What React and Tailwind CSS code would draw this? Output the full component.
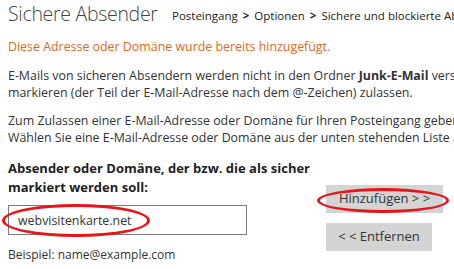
export default function App() {
  return (
    <div
      className="w-[454px] h-[269px] overflow-hidden bg-white text-[#333] px-2"
      style={{ fontFamily: '"Open Sans", "Noto Sans", sans-serif' }}
    >
      {/* Header */}
      <div className="flex items-center h-[28px] whitespace-nowrap">
        <h1 className="w-[164px] shrink-0 text-[19.5px] font-light tracking-[-0.3px] leading-[28px] text-[#444]">
          Sichere Absender
        </h1>
        <nav className="shrink-0 mt-[4px] text-[11.5px] text-[#222] flex items-center gap-[5px]">
          <span>Posteingang</span>
          <span className="font-bold">&gt;</span>
          <span>Optionen</span>
          <span className="font-bold">&gt;</span>
          <span>Sichere und blockierte Absender</span>
        </nav>
      </div>

      {/* Status message */}
      <p className="mt-[10px] text-[12.4px] leading-[17px] text-[#dc6a22] whitespace-nowrap">
        Diese Adresse oder Domäne wurde bereits hinzugefügt.
      </p>

      {/* Info */}
      <div className="mt-[12px] text-[12.4px] leading-[17px] whitespace-nowrap">
        <p>
          E-Mails von sicheren Absendern werden nicht in den Ordner <b>Junk-E-Mail</b> verschoben. Sie
        </p>
        <p>markieren (der Teil der E-Mail-Adresse nach dem @-Zeichen) zulassen.</p>
      </div>
      <div className="mt-[11px] text-[12.4px] leading-[17px] whitespace-nowrap">
        <p>Zum Zulassen einer E-Mail-Adresse oder Domäne für Ihren Posteingang geben Sie</p>
        <p>Wählen Sie eine E-Mail-Adresse oder Domäne aus der unten stehenden Liste aus</p>
      </div>

      {/* Form */}
      <div className="flex items-start">
        <div className="w-[318px] shrink-0">
          <label className="block mt-[13px] text-[13px] leading-[19px] font-bold text-[#222]">
            Absender oder Domäne, der bzw. die als sicher
            <br />
            markiert werden soll:
          </label>
          <div className="relative mt-[8px] w-[239px]">
            <input
              readOnly
              value="webvisitenkarte.net"
              className="w-full h-[30px] border border-[#7a7a7a] px-[9px] text-[12.4px] text-[#333] outline-none"
              style={{ fontFamily: "inherit" }}
            />
            <span className="absolute left-[-6px] top-[-1px] w-[148px] h-[33px] rounded-[50%] border-[3px] border-[#e8141b] pointer-events-none" />
          </div>
          <p className="mt-[12px] text-[12px] leading-[16px]">Beispiel: name@example.com</p>
        </div>

        <div className="pt-[39px] flex flex-col gap-[10px]">
          <div className="relative">
            <button className="w-[117px] h-[28px] bg-[#d4d4d4] text-[13px] text-[#333]">
              Hinzufügen &gt; &gt;
            </button>
            <span className="absolute left-[-9px] top-[3px] w-[132px] h-[25px] rounded-[50%] border-[3px] border-[#e8141b] pointer-events-none" />
          </div>
          <button className="w-[106px] h-[28px] bg-[#d4d4d4] text-[13px] text-[#333]">
            &lt; &lt; Entfernen
          </button>
        </div>
      </div>
    </div>
  );
}
